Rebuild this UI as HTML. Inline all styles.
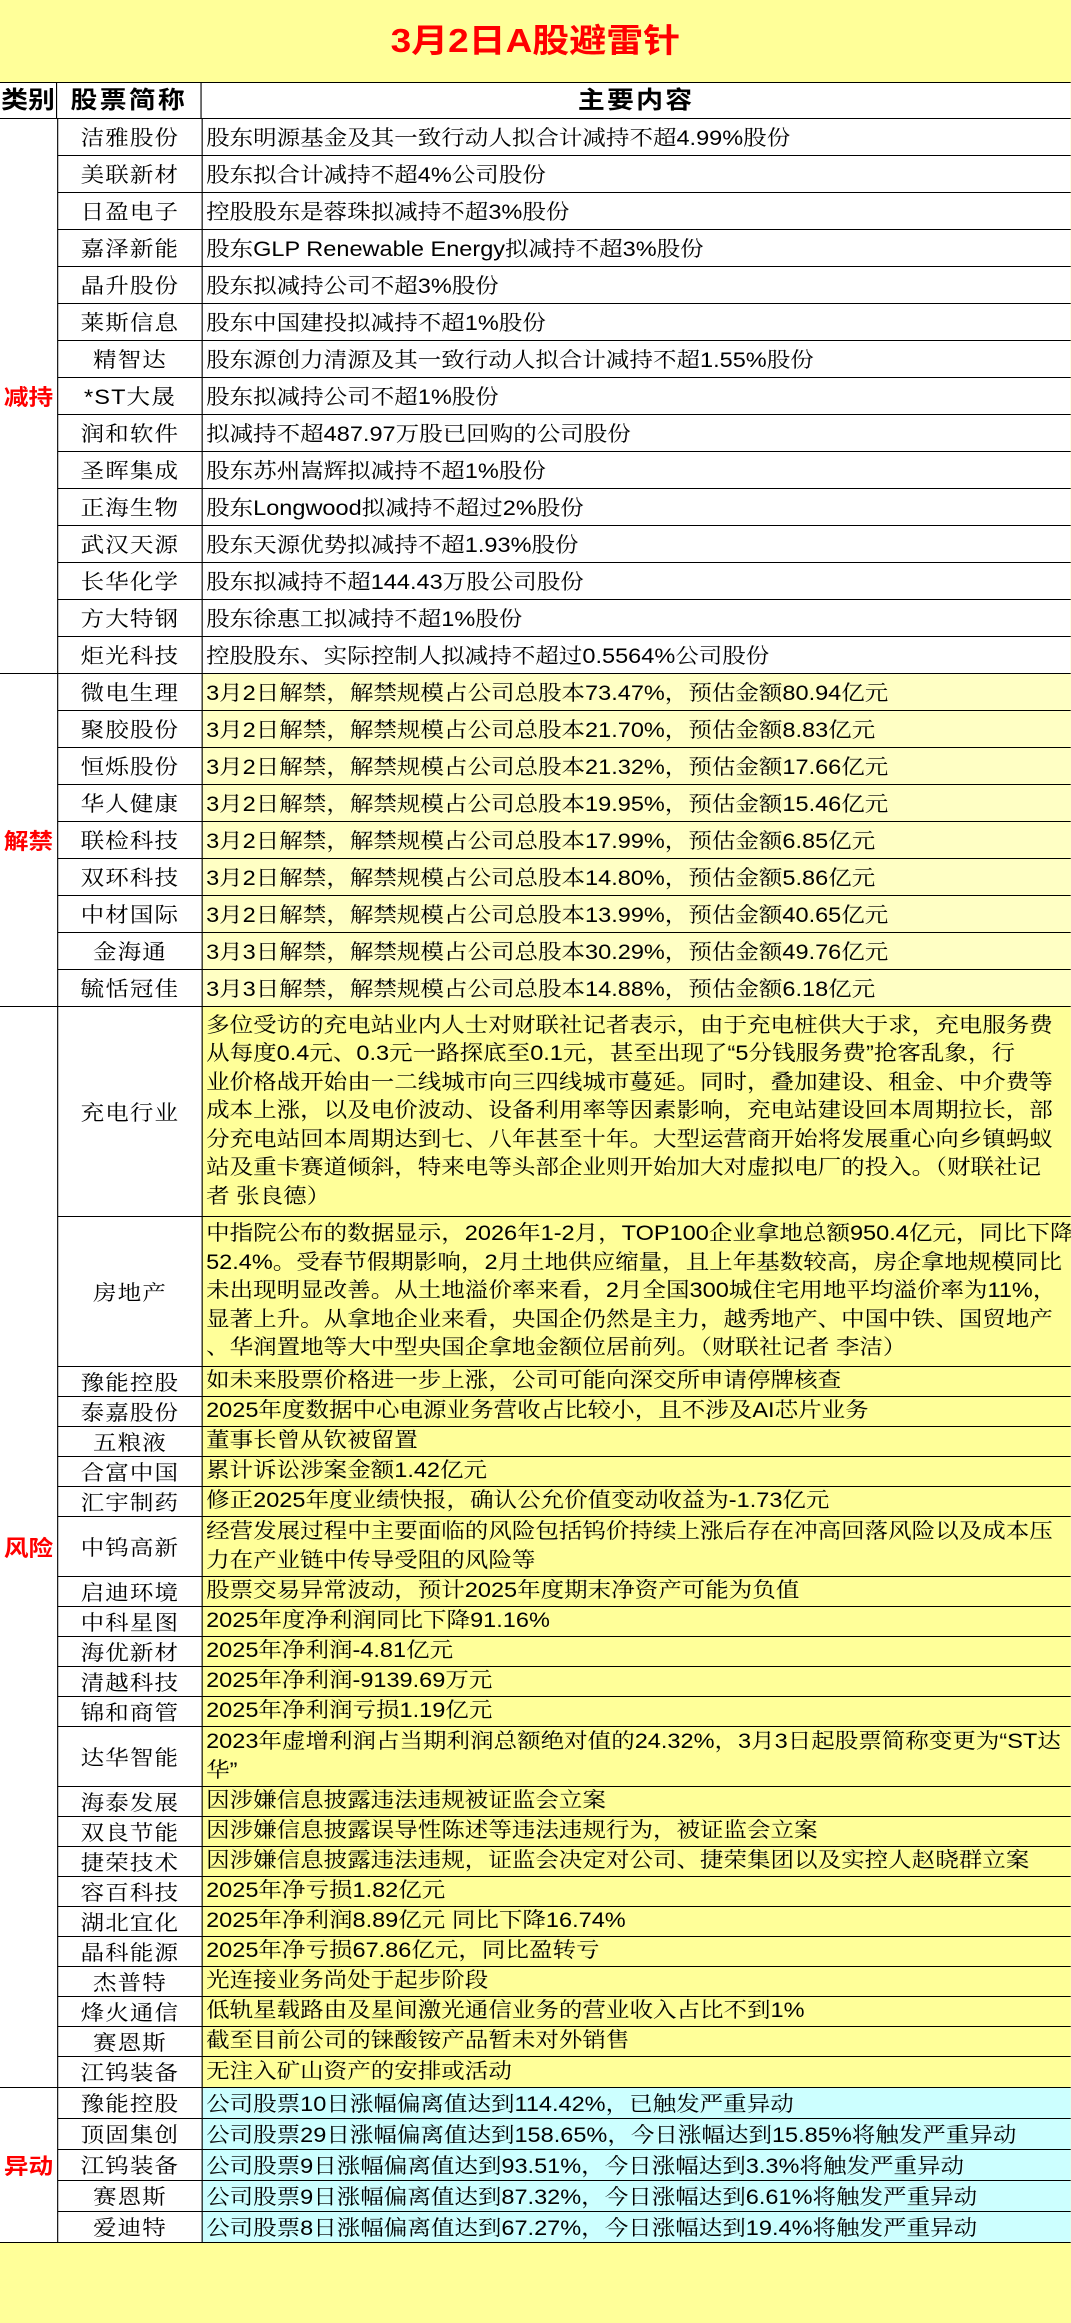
<!DOCTYPE html>
<html><head><meta charset="utf-8">
<style>
html,body{margin:0;padding:0;background:#FFFF99;}
body{width:1071px;height:2323px;overflow:hidden;position:relative;}
#w{position:absolute;left:0;top:0;width:956px;transform:scaleX(1.12);transform-origin:0 0;font-family:"Liberation Sans Narrow","Liberation Sans","Noto Serif CJK SC",serif;font-size:21px;color:#000;}
.title{height:82px;background:#FFFF99;text-align:center;line-height:82px;font-family:"Liberation Sans","Noto Sans CJK SC",sans-serif;font-weight:bold;font-size:33px;color:#f00;}
.hdr{height:37px;box-sizing:border-box;border-top:1px solid #000;border-bottom:1px solid #000;display:flex;background:#fff;font-family:"Liberation Sans","Noto Sans CJK SC",sans-serif;font-weight:bold;font-size:24px;line-height:35px;}
.hdr div{box-sizing:border-box;}
.sec{position:relative;border-bottom:1px solid #000;background:#fff;}
.cat{position:absolute;left:0;top:0;bottom:0;width:51px;display:flex;align-items:center;justify-content:center;color:#f00;font-weight:bold;font-family:"Liberation Sans","Noto Sans CJK SC",sans-serif;font-size:22px;}
.r{display:flex;margin-left:51px;box-sizing:border-box;border-bottom:1px solid #000;height:37px;}
.r:last-child{border-bottom:none;height:36px;}
.n{width:129px;flex:none;border-left:1px solid #000;box-sizing:border-box;display:flex;align-items:center;justify-content:center;background:#fff;letter-spacing:1px;}
.c{flex:1;border-left:1px solid #000;padding-left:3px;display:flex;align-items:center;white-space:nowrap;overflow:hidden;}
.y .c{background:#FFFFC4;}
.k .c{background:#FFFF99;}
.a .c{background:#CCFFFF;}
.k .r{height:30px;}
.k .r.d{height:60px;}
.k .c{line-height:28.5px;}
.k .r.p1{height:210px;}
.k .r.p2{height:150px;}
.a .r{height:31px;}
.a .r:last-child{height:30px;}
</style></head><body>
<div id="w">
<div class="title">3月2日A股避雷针</div>
<div class="hdr"><div style="width:51px;border-right:1px solid #000;text-align:center;">类别</div><div style="width:129px;text-align:center;border-right:1px solid #000;letter-spacing:2px;">股票简称</div><div style="flex:1;text-align:center;letter-spacing:2px;">主要内容</div></div>

<div class="sec">
<div class="cat">减持</div>
<div class="r"><div class="n">洁雅股份</div><div class="c">股东明源基金及其一致行动人拟合计减持不超4.99%股份</div></div>
<div class="r"><div class="n">美联新材</div><div class="c">股东拟合计减持不超4%公司股份</div></div>
<div class="r"><div class="n">日盈电子</div><div class="c">控股股东是蓉珠拟减持不超3%股份</div></div>
<div class="r"><div class="n">嘉泽新能</div><div class="c">股东GLP Renewable Energy拟减持不超3%股份</div></div>
<div class="r"><div class="n">晶升股份</div><div class="c">股东拟减持公司不超3%股份</div></div>
<div class="r"><div class="n">莱斯信息</div><div class="c">股东中国建投拟减持不超1%股份</div></div>
<div class="r"><div class="n">精智达</div><div class="c">股东源创力清源及其一致行动人拟合计减持不超1.55%股份</div></div>
<div class="r"><div class="n">*ST大晟</div><div class="c">股东拟减持公司不超1%股份</div></div>
<div class="r"><div class="n">润和软件</div><div class="c">拟减持不超487.97万股已回购的公司股份</div></div>
<div class="r"><div class="n">圣晖集成</div><div class="c">股东苏州嵩辉拟减持不超1%股份</div></div>
<div class="r"><div class="n">正海生物</div><div class="c">股东Longwood拟减持不超过2%股份</div></div>
<div class="r"><div class="n">武汉天源</div><div class="c">股东天源优势拟减持不超1.93%股份</div></div>
<div class="r"><div class="n">长华化学</div><div class="c">股东拟减持不超144.43万股公司股份</div></div>
<div class="r"><div class="n">方大特钢</div><div class="c">股东徐惠工拟减持不超1%股份</div></div>
<div class="r"><div class="n">炬光科技</div><div class="c">控股股东、实际控制人拟减持不超过0.5564%公司股份</div></div>
</div>

<div class="sec y">
<div class="cat">解禁</div>
<div class="r"><div class="n">微电生理</div><div class="c">3月2日解禁，解禁规模占公司总股本73.47%，预估金额80.94亿元</div></div>
<div class="r"><div class="n">聚胶股份</div><div class="c">3月2日解禁，解禁规模占公司总股本21.70%，预估金额8.83亿元</div></div>
<div class="r"><div class="n">恒烁股份</div><div class="c">3月2日解禁，解禁规模占公司总股本21.32%，预估金额17.66亿元</div></div>
<div class="r"><div class="n">华人健康</div><div class="c">3月2日解禁，解禁规模占公司总股本19.95%，预估金额15.46亿元</div></div>
<div class="r"><div class="n">联检科技</div><div class="c">3月2日解禁，解禁规模占公司总股本17.99%，预估金额6.85亿元</div></div>
<div class="r"><div class="n">双环科技</div><div class="c">3月2日解禁，解禁规模占公司总股本14.80%，预估金额5.86亿元</div></div>
<div class="r"><div class="n">中材国际</div><div class="c">3月2日解禁，解禁规模占公司总股本13.99%，预估金额40.65亿元</div></div>
<div class="r"><div class="n">金海通</div><div class="c">3月3日解禁，解禁规模占公司总股本30.29%，预估金额49.76亿元</div></div>
<div class="r"><div class="n">毓恬冠佳</div><div class="c">3月3日解禁，解禁规模占公司总股本14.88%，预估金额6.18亿元</div></div>
</div>

<div class="sec k">
<div class="cat">风险</div>
<div class="r p1"><div class="n">充电行业</div><div class="c">多位受访的充电站业内人士对财联社记者表示，由于充电桩供大于求，充电服务费<br>从每度0.4元、0.3元一路探底至0.1元，甚至出现了“5分钱服务费”抢客乱象，行<br>业价格战开始由一二线城市向三四线城市蔓延。同时，叠加建设、租金、中介费等<br>成本上涨，以及电价波动、设备利用率等因素影响，充电站建设回本周期拉长，部<br>分充电站回本周期达到七、八年甚至十年。大型运营商开始将发展重心向乡镇蚂蚁<br>站及重卡赛道倾斜，特来电等头部企业则开始加大对虚拟电厂的投入。（财联社记<br>者 张良德）</div></div>
<div class="r p2"><div class="n">房地产</div><div class="c">中指院公布的数据显示，2026年1-2月，TOP100企业拿地总额950.4亿元，同比下降<br>52.4%。受春节假期影响，2月土地供应缩量，且上年基数较高，房企拿地规模同比<br>未出现明显改善。从土地溢价率来看，2月全国300城住宅用地平均溢价率为11%，<br>显著上升。从拿地企业来看，央国企仍然是主力，越秀地产、中国中铁、国贸地产<br>、华润置地等大中型央国企拿地金额位居前列。（财联社记者 李洁）</div></div>
<div class="r"><div class="n">豫能控股</div><div class="c">如未来股票价格进一步上涨，公司可能向深交所申请停牌核查</div></div>
<div class="r"><div class="n">泰嘉股份</div><div class="c">2025年度数据中心电源业务营收占比较小，且不涉及AI芯片业务</div></div>
<div class="r"><div class="n">五粮液</div><div class="c">董事长曾从钦被留置</div></div>
<div class="r"><div class="n">合富中国</div><div class="c">累计诉讼涉案金额1.42亿元</div></div>
<div class="r"><div class="n">汇宇制药</div><div class="c">修正2025年度业绩快报，确认公允价值变动收益为-1.73亿元</div></div>
<div class="r d"><div class="n">中钨高新</div><div class="c">经营发展过程中主要面临的风险包括钨价持续上涨后存在冲高回落风险以及成本压<br>力在产业链中传导受阻的风险等</div></div>
<div class="r"><div class="n">启迪环境</div><div class="c">股票交易异常波动，预计2025年度期末净资产可能为负值</div></div>
<div class="r"><div class="n">中科星图</div><div class="c">2025年度净利润同比下降91.16%</div></div>
<div class="r"><div class="n">海优新材</div><div class="c">2025年净利润-4.81亿元</div></div>
<div class="r"><div class="n">清越科技</div><div class="c">2025年净利润-9139.69万元</div></div>
<div class="r"><div class="n">锦和商管</div><div class="c">2025年净利润亏损1.19亿元</div></div>
<div class="r d"><div class="n">达华智能</div><div class="c">2023年虚增利润占当期利润总额绝对值的24.32%，3月3日起股票简称变更为“ST达<br>华”</div></div>
<div class="r"><div class="n">海泰发展</div><div class="c">因涉嫌信息披露违法违规被证监会立案</div></div>
<div class="r"><div class="n">双良节能</div><div class="c">因涉嫌信息披露误导性陈述等违法违规行为，被证监会立案</div></div>
<div class="r"><div class="n">捷荣技术</div><div class="c">因涉嫌信息披露违法违规，证监会决定对公司、捷荣集团以及实控人赵晓群立案</div></div>
<div class="r"><div class="n">容百科技</div><div class="c">2025年净亏损1.82亿元</div></div>
<div class="r"><div class="n">湖北宜化</div><div class="c">2025年净利润8.89亿元 同比下降16.74%</div></div>
<div class="r"><div class="n">晶科能源</div><div class="c">2025年净亏损67.86亿元，同比盈转亏</div></div>
<div class="r"><div class="n">杰普特</div><div class="c">光连接业务尚处于起步阶段</div></div>
<div class="r"><div class="n">烽火通信</div><div class="c">低轨星载路由及星间激光通信业务的营业收入占比不到1%</div></div>
<div class="r"><div class="n">赛恩斯</div><div class="c">截至目前公司的铼酸铵产品暂未对外销售</div></div>
<div class="r"><div class="n">江钨装备</div><div class="c">无注入矿山资产的安排或活动</div></div>
</div>

<div class="sec a">
<div class="cat">异动</div>
<div class="r"><div class="n">豫能控股</div><div class="c">公司股票10日涨幅偏离值达到114.42%，已触发严重异动</div></div>
<div class="r"><div class="n">顶固集创</div><div class="c">公司股票29日涨幅偏离值达到158.65%，今日涨幅达到15.85%将触发严重异动</div></div>
<div class="r"><div class="n">江钨装备</div><div class="c">公司股票9日涨幅偏离值达到93.51%，今日涨幅达到3.3%将触发严重异动</div></div>
<div class="r"><div class="n">赛恩斯</div><div class="c">公司股票9日涨幅偏离值达到87.32%，今日涨幅达到6.61%将触发严重异动</div></div>
<div class="r"><div class="n">爱迪特</div><div class="c">公司股票8日涨幅偏离值达到67.27%，今日涨幅达到19.4%将触发严重异动</div></div>
</div>
</div>
</body></html>
